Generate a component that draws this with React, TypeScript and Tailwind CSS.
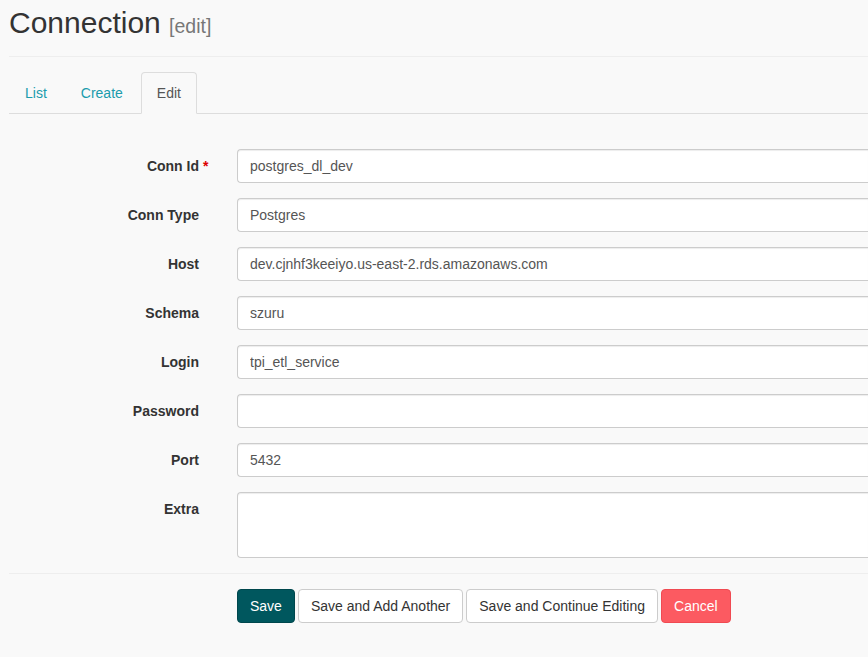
const FIELDS: { label: string; value: string; required?: boolean }[] = [
  { label: "Conn Id", value: "postgres_dl_dev", required: true },
  { label: "Conn Type", value: "Postgres" },
  { label: "Host", value: "dev.cjnhf3keeiyo.us-east-2.rds.amazonaws.com" },
  { label: "Schema", value: "szuru" },
  { label: "Login", value: "tpi_etl_service" },
  { label: "Password", value: "" },
  { label: "Port", value: "5432" },
];

export default function App() {
  return (
    <div className="min-h-[657px] overflow-hidden bg-[#f9f9f9] font-['Liberation_Sans',Arial,sans-serif] text-[14px] text-[#333]">
      <div className="pl-[9px]">
        <h1 className="pt-[3px] text-[30px] leading-[40px] text-[#333]">
          Connection <small className="text-[19.5px] text-[#777]">[edit]</small>
        </h1>
        <hr className="mt-[10px] border-t border-[#eee]" />

        <ul className="mt-[15px] flex border-b border-[#ddd]">
          <Tab label="List" />
          <Tab label="Create" />
          <Tab label="Edit" active />
        </ul>

        <form className="mt-[35px] space-y-[15px]">
          {FIELDS.map((f) => (
            <Row key={f.label} label={f.label} required={f.required}>
              <input
                readOnly
                defaultValue={f.value}
                className="h-[34px] w-full rounded-l-[4px] border border-r-0 border-[#ccc] bg-white px-[12px] text-[14px] text-[#555] shadow-[inset_0_1px_1px_rgba(0,0,0,0.075)] outline-none"
              />
            </Row>
          ))}
          <Row label="Extra">
            <textarea
              readOnly
              className="block h-[66px] w-full resize-none rounded-l-[4px] border border-r-0 border-[#ccc] bg-white px-[12px] shadow-[inset_0_1px_1px_rgba(0,0,0,0.075)] outline-none"
            />
          </Row>
        </form>

        <hr className="mt-[15px] border-t border-[#eee]" />

        <div className="mt-[15px] flex gap-[3px] pl-[228px]">
          <button className="h-[34px] rounded-[4px] border border-[#00474d] bg-[#00575e] px-[12px] text-white">
            Save
          </button>
          <button className="h-[34px] rounded-[4px] border border-[#ccc] bg-white px-[12px] text-[#333]">
            Save and Add Another
          </button>
          <button className="h-[34px] rounded-[4px] border border-[#ccc] bg-white px-[12px] text-[#333]">
            Save and Continue Editing
          </button>
          <button className="h-[34px] rounded-[4px] border border-[#f04a52] bg-[#fc5a61] px-[12px] text-white">
            Cancel
          </button>
        </div>
      </div>
    </div>
  );
}

function Tab({ label, active }: { label: string; active?: boolean }) {
  return (
    <li className="-mb-px mr-[2px]">
      <a
        className={
          active
            ? "block rounded-t-[4px] border border-[#ddd] border-b-transparent bg-[#f9f9f9] px-[15px] py-[10px] leading-[20px] text-[#555]"
            : "block border border-transparent px-[15px] py-[10px] leading-[20px] text-[#1b9cad]"
        }
      >
        {label}
      </a>
    </li>
  );
}

function Row({
  label,
  required,
  children,
}: {
  label: string;
  required?: boolean;
  children: React.ReactNode;
}) {
  return (
    <div className="flex">
      <label className="w-[228px] shrink-0 pr-[38px] pt-[7px] text-right font-bold leading-[20px]">
        <span className="relative">
          {label}
          {required ? (
            <span className="absolute left-full top-[-2px] ml-[4px] text-[#d00]">*</span>
          ) : null}
        </span>
      </label>
      <div className="flex-1">{children}</div>
    </div>
  );
}
